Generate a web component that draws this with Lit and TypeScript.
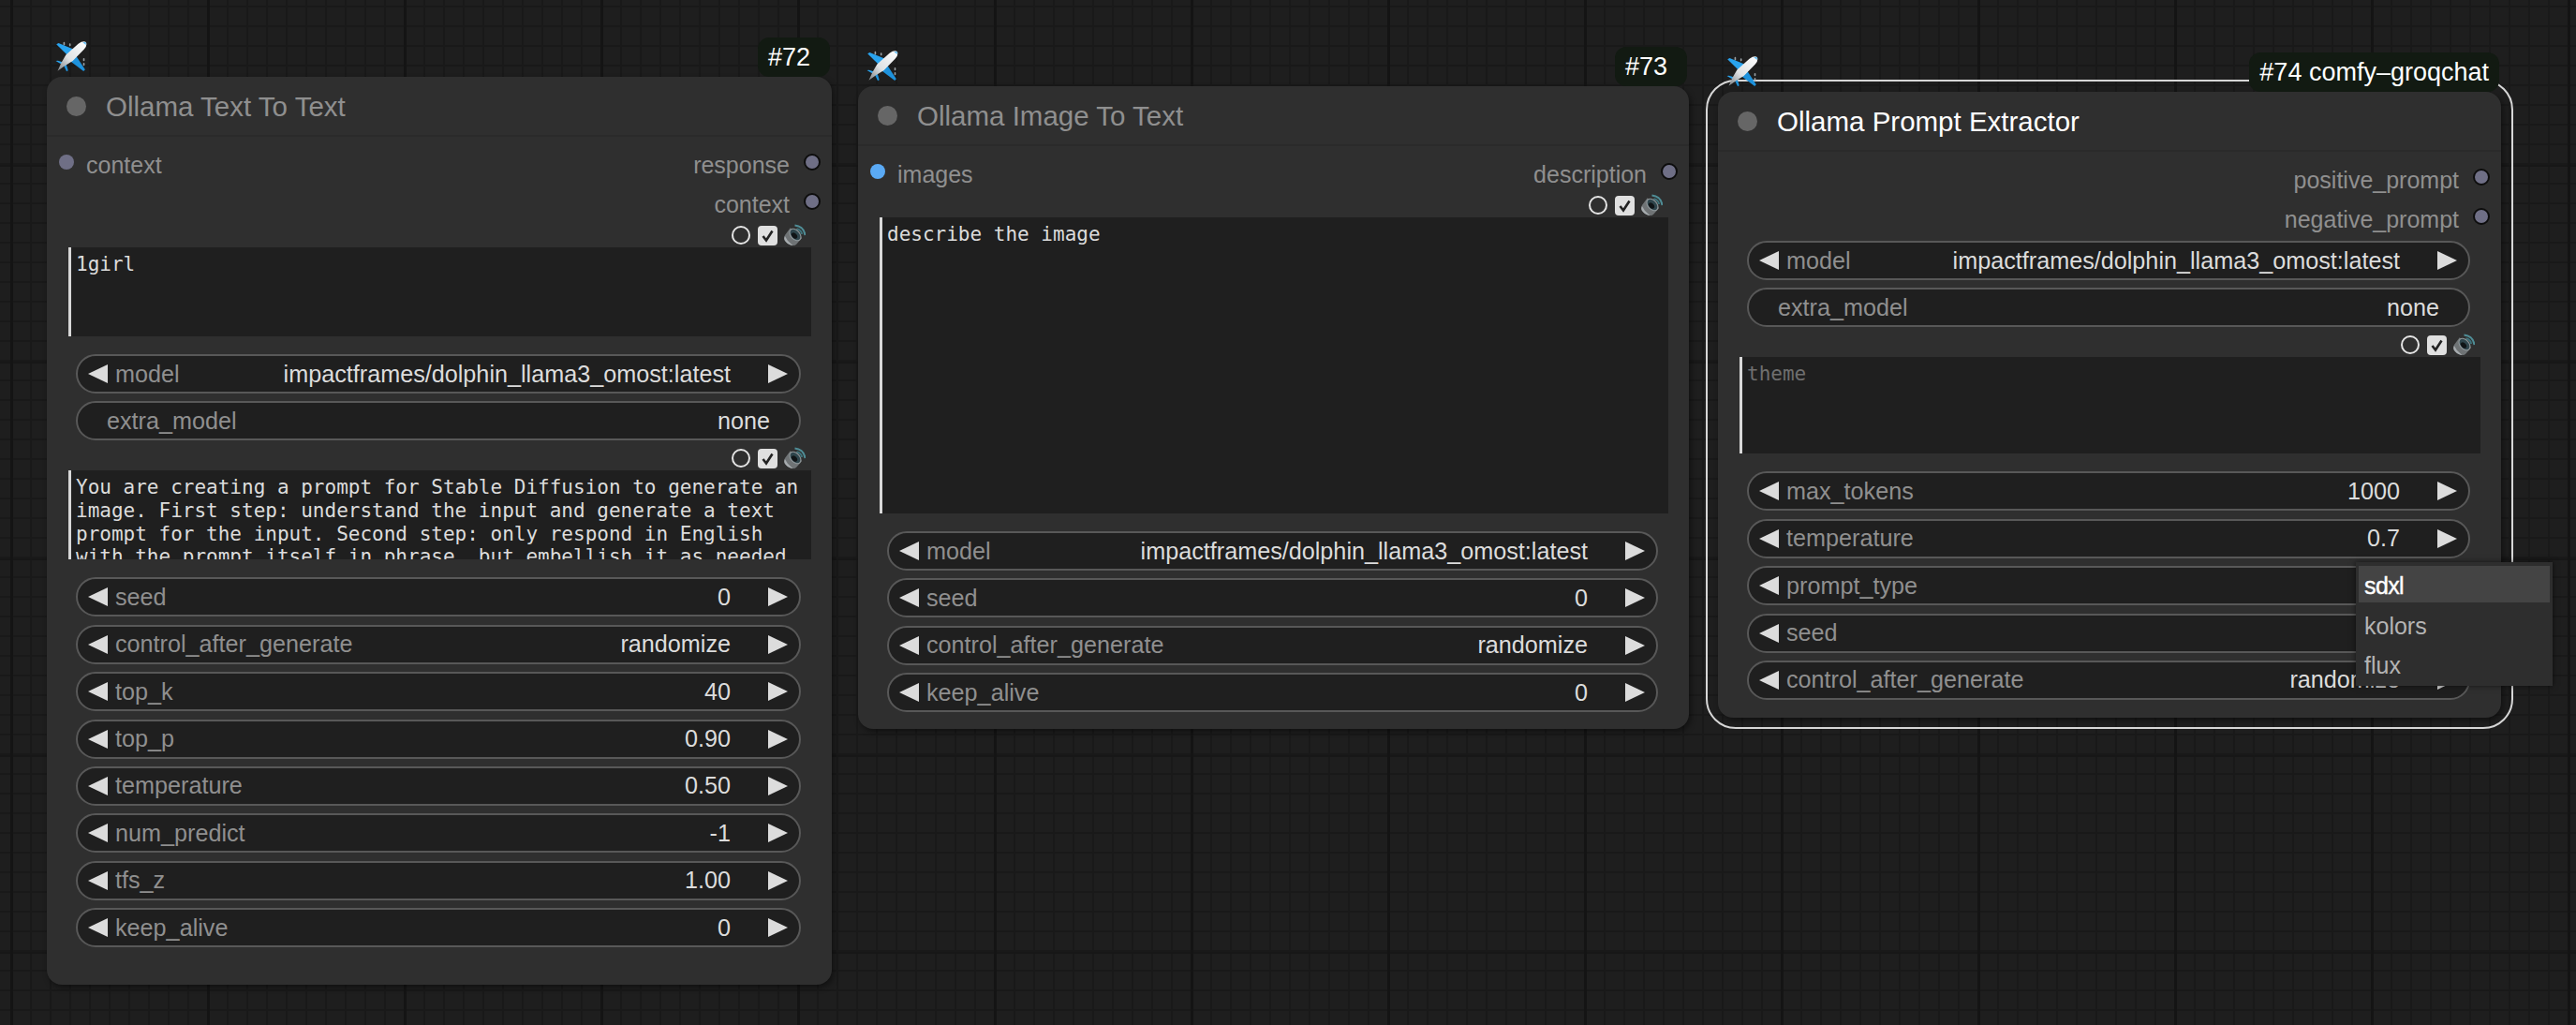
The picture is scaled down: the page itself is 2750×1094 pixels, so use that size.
import { LitElement, html, css, svg, nothing } from 'lit';
import { customElement, property } from 'lit/decorators.js';

type Slot = { in?: string; inColor?: string; out?: string };
type Widget = { label: string; value: string; arrows?: boolean };
type Block =
  | { kind: 'widgets'; rows: Widget[]; tight?: boolean }
  | { kind: 'text'; value: string; height: number; placeholder?: boolean };

type NodeData = {
  id: number;
  x: number;
  y: number;
  width: number;
  tail: number;
  title: string;
  badge: string;
  active?: boolean;
  slots: Slot[];
  blocks: Block[];
};

const MODEL = 'impactframes/dolphin_llama3_omost:latest';
const w = (label: string, value: string, arrows = true): Widget => ({ label, value, arrows });

const NODES: NodeData[] = [
  {
    id: 72, x: 50, y: 82, width: 838, tail: 40,
    title: 'Ollama Text To Text',
    badge: '#72',
    slots: [{ in: 'context', out: 'response' }, { out: 'context' }],
    blocks: [
      { kind: 'text', value: '1girl', height: 95 },
      { kind: 'widgets', rows: [w('model', MODEL), w('extra_model', 'none', false)] },
      {
        kind: 'text',
        height: 95,
        value:
          'You are creating a prompt for Stable Diffusion to generate an image. First step: understand the input and generate a text prompt for the input. Second step: only respond in English with the prompt itself in phrase, but embellish it as needed',
      },
      {
        kind: 'widgets',
        rows: [
          w('seed', '0'),
          w('control_after_generate', 'randomize'),
          w('top_k', '40'),
          w('top_p', '0.90'),
          w('temperature', '0.50'),
          w('num_predict', '-1'),
          w('tfs_z', '1.00'),
          w('keep_alive', '0'),
        ],
      },
    ],
  },
  {
    id: 73, x: 916, y: 92, width: 887, tail: 18,
    title: 'Ollama Image To Text',
    badge: '#73',
    slots: [{ in: 'images', inColor: '#5aaaf5', out: 'description' }],
    blocks: [
      { kind: 'text', value: 'describe the image', height: 316 },
      {
        kind: 'widgets',
        rows: [
          w('model', MODEL),
          w('seed', '0'),
          w('control_after_generate', 'randomize'),
          w('keep_alive', '0'),
        ],
      },
    ],
  },
  {
    id: 74, x: 1834, y: 98, width: 836, tail: 19,
    title: 'Ollama Prompt Extractor',
    badge: '#74 comfy–groqchat',
    active: true,
    slots: [{ out: 'positive_prompt' }, { out: 'negative_prompt' }],
    blocks: [
      { kind: 'widgets', tight: true, rows: [w('model', MODEL), w('extra_model', 'none', false)] },
      { kind: 'text', value: 'theme', height: 103, placeholder: true },
      {
        kind: 'widgets',
        rows: [
          w('max_tokens', '1000'),
          w('temperature', '0.7'),
          w('prompt_type', 'sdxl'),
          w('seed', '0'),
          w('control_after_generate', 'randomize'),
        ],
      },
    ],
  },
];

const planeIcon = svg`
  <svg class="plane" viewBox="0 0 102 100">
    <defs>
      <linearGradient id="body" x1="0" y1="1" x2="1" y2="0">
        <stop offset="0" stop-color="#7d8286" />
        <stop offset="0.4" stop-color="#dfe1e3" />
        <stop offset="1" stop-color="#ffffff" />
      </linearGradient>
    </defs>
    <g stroke="#9aa0a5" stroke-width="5" stroke-linecap="round">
      <path d="M28 5v6M47 9v5M92 57v5M92 72v5" />
    </g>
    <path fill="#29a3ee" d="M3 10 10 6 58 26 40 46Z" />
    <path fill="#1e92dc" d="M66 46 96 92 91 97 50 66Z" />
    <path fill="#29a3ee" d="M1 64 8 63 34 71 27 79Z" />
    <path fill="#1e92dc" d="M27 79 34 71 41 95 36 98Z" />
    <path fill="url(#body)" d="M99 3Q104 13 93 26L56 64 28 81 7 96 19 70 34 44 74 8Q90-3 99 3Z" />
    <path fill="#29a3ee" d="M88 3 99 3 99 12 94 8Z" opacity="0.7" />
  </svg>
`;

const speakerIcon = svg`
  <svg class="speaker" viewBox="0 0 24 24">
    <path d="M12 1Q22 2 23.500 12" fill="none" stroke="#4f8d96" stroke-width="2" />
    <path d="M14 5Q19 6 20 11" fill="none" stroke="#3f747c" stroke-width="2" />
    <path fill="#6f7375" d="M7 4 1 12Q-1 16 2 19 6 23.500 10 23.500 12 24 14 22L20 15Z" />
    <path fill="#a7acaf" d="M1 13Q-1 17 2 19.500 6 23.500 10 23.500 7 21 4 18Z" />
    <ellipse cx="12.500" cy="11.500" rx="5" ry="7.500" transform="rotate(-42 12.500 11.500)" fill="#2f454c" stroke="#8f979a" stroke-width="1.200" />
    <ellipse cx="11.500" cy="12.500" rx="2.600" ry="3.800" transform="rotate(-42 11.500 12.500)" fill="#101416" />
  </svg>
`;

@customElement('comfy-node')
export class ComfyNode extends LitElement {
  @property({ attribute: false }) data!: NodeData;

  static styles = css`
    :host {
      display: block;
      position: absolute;
      font-family: 'Liberation Sans', Arial, sans-serif;
    }
    .outline {
      position: absolute;
      inset: -13px -13px -12px -13px;
      border: 2px solid #d6d6d6;
      border-radius: 32px;
    }
    .card {
      position: relative;
      background: #2f2f2f;
      border-radius: 16px;
      box-shadow: 2px 3px 6px rgba(0, 0, 0, 0.45);
    }
    .plane {
      position: absolute;
      left: 9px;
      top: -38px;
      width: 34px;
      height: 33px;
    }
    .speaker {
      width: 23px;
      height: 24px;
    }
    .badge {
      position: absolute;
      right: 2px;
      top: -42px;
      box-sizing: border-box;
      height: 42px;
      min-width: 77px;
      padding: 0 11px;
      display: flex;
      align-items: center;
      background: #121a12;
      border-radius: 12px;
      color: #fff;
      font-size: 27px;
      white-space: nowrap;
    }
    .header {
      box-sizing: border-box;
      height: 64px;
      display: flex;
      align-items: center;
      border-bottom: 2px solid #2a2a2a;
      padding: 2px 0 0 21px;
      color: #8f8f8f;
      font-size: 29.5px;
    }
    .active .header {
      color: #fff;
    }
    .dot {
      width: 21px;
      height: 21px;
      border-radius: 50%;
      background: #666;
      margin: -2px 21px 0 0;
    }
    .body {
      padding-top: 8px;
    }
    .slot {
      box-sizing: border-box;
      height: 42px;
      display: flex;
      align-items: center;
      justify-content: space-between;
      padding: 3px 12px 0 13px;
      font-size: 25px;
      color: #8f8f8f;
    }
    .side {
      display: flex;
      align-items: center;
    }
    .pin {
      width: 16px;
      height: 16px;
      border-radius: 50%;
      background: #6f6f86;
      margin-top: -7px;
    }
    .side.in .pin {
      margin-right: 13px;
    }
    .side.out .pin {
      width: 14px;
      height: 14px;
      border: 2px solid #0d0d0d;
      margin-left: 15px;
    }
    .text-block {
      margin: 0 22px 0 23px;
    }
    .widgets + .text-block {
      margin-top: 6px;
    }
    .toggles {
      height: 26px;
      display: flex;
      align-items: center;
      justify-content: flex-end;
      gap: 7px;
      padding-right: 6px;
    }
    .radio {
      box-sizing: border-box;
      width: 20px;
      height: 20px;
      margin-right: 1px;
      border: 2px solid #e4e4e4;
      border-radius: 50%;
    }
    .check {
      width: 21px;
      height: 21px;
      border-radius: 4px;
      background: #e0e0e0;
    }
    .check svg {
      display: block;
    }
    .text {
      box-sizing: border-box;
      border-left: 3px solid #d8d8d8;
      background: #1f1f1f;
      padding: 6px 5px 0;
      overflow: hidden;
      color: #dcdcdc;
      font-family: 'DejaVu Sans Mono', 'Liberation Mono', monospace;
      font-size: 21px;
      line-height: 24.6px;
    }
    .text.placeholder {
      color: #6f6f6f;
    }
    .widgets {
      display: flex;
      flex-direction: column;
      gap: 8.4px;
      margin: 19px 33px 0 31px;
    }
    .widgets.tight {
      margin-top: 3px;
    }
    .widget {
      box-sizing: border-box;
      height: 42px;
      display: flex;
      align-items: center;
      border: 2px solid #585858;
      border-radius: 21px;
      background: #1f1f1f;
      padding: 0 12px 0 31px;
      font-size: 25.2px;
      color: #8f8f8f;
    }
    .widget.arrows {
      padding: 0 12px 0 11px;
    }
    .arrow-l,
    .arrow-r {
      width: 0;
      height: 0;
      border-top: 10px solid transparent;
      border-bottom: 10px solid transparent;
    }
    .arrow-l {
      border-right: 21px solid #dcdcdc;
      margin-right: 8px;
    }
    .arrow-r {
      border-left: 21px solid #dcdcdc;
      margin-left: 40px;
    }
    .value {
      margin-left: auto;
      color: #dcdcdc;
      padding-right: 19px;
    }
    .arrows .value {
      padding-right: 0;
    }
  `;

  renderSlot(s: Slot) {
    return html`
      <div class="slot">
        <div class="side in">
          ${s.in
            ? html`<span class="pin" style=${s.inColor ? `background:${s.inColor}` : ''}></span>${s.in}`
            : nothing}
        </div>
        <div class="side out">${s.out ? html`${s.out}<span class="pin"></span>` : nothing}</div>
      </div>
    `;
  }

  renderBlock(b: Block) {
    if (b.kind === 'text') {
      return html`
        <div class="text-block">
          <div class="toggles">
            <span class="radio"></span>
            <span class="check">
              <svg viewBox="0 0 21 21" width="21" height="21">
                <path d="M5.500 11 9 15.500 15.500 5.500" fill="none" stroke="#222" stroke-width="2.600" />
              </svg>
            </span>
            ${speakerIcon}
          </div>
          <div class="text ${b.placeholder ? 'placeholder' : ''}" style="height:${b.height}px">${b.value}</div>
        </div>
      `;
    }
    return html`
      <div class="widgets ${b.tight ? 'tight' : ''}">
        ${b.rows.map(
          (r) => html`
            <div class="widget ${r.arrows ? 'arrows' : ''}">
              ${r.arrows ? html`<span class="arrow-l"></span>` : nothing}
              <span>${r.label}</span>
              <span class="value">${r.value}</span>
              ${r.arrows ? html`<span class="arrow-r"></span>` : nothing}
            </div>
          `
        )}
      </div>
    `;
  }

  render() {
    const n = this.data;
    return html`
      ${n.active ? html`<div class="outline"></div>` : nothing}
      <div class="card ${n.active ? 'active' : ''}" style="padding-bottom:${n.tail}px">
        ${planeIcon}
        <div class="badge">${n.badge}</div>
        <div class="header"><span class="dot"></span>${n.title}</div>
        <div class="body">
          ${n.slots.map((s) => this.renderSlot(s))}
          ${n.blocks.map((b) => this.renderBlock(b))}
        </div>
      </div>
    `;
  }
}

@customElement('app-root')
export class AppRoot extends LitElement {
  static styles = css`
    :host {
      display: block;
      position: relative;
      width: 2750px;
      height: 1094px;
      overflow: hidden;
      background-color: #1e1e1e;
      background-image:
        linear-gradient(90deg, #141414 3px, transparent 3px),
        linear-gradient(#171717 2px, transparent 2px),
        linear-gradient(90deg, #191919 2px, transparent 2px),
        linear-gradient(#191919 2px, transparent 2px);
      background-size: 210px 210px, 210px 210px, 21px 21px, 21px 21px;
      background-position: 11px 0, 0 176px, 11px 0, 0 6px;
      font-family: 'Liberation Sans', Arial, sans-serif;
    }
    .menu {
      position: absolute;
      left: 2515px;
      top: 600px;
      box-sizing: border-box;
      width: 210px;
      height: 132px;
      padding: 4px 3px;
      background: #2e2e2e;
      box-shadow: 0 0 6px rgba(0, 0, 0, 0.6);
      font-size: 25px;
      color: #b4b4b4;
    }
    .item {
      box-sizing: border-box;
      height: 39px;
      margin-bottom: 3.5px;
      padding: 4px 0 0 6px;
      display: flex;
      align-items: center;
    }
    .item.on {
      background: #444;
      color: #fff;
      letter-spacing: -0.6px;
      -webkit-text-stroke: 0.4px #fff;
    }
  `;

  render() {
    return html`
      ${NODES.map(
        (n) => html`<comfy-node
          .data=${n}
          style="left:${n.x}px;top:${n.y}px;width:${n.width}px"
        ></comfy-node>`
      )}
      <div class="menu">
        <div class="item on">sdxl</div>
        <div class="item">kolors</div>
        <div class="item">flux</div>
      </div>
    `;
  }
}
